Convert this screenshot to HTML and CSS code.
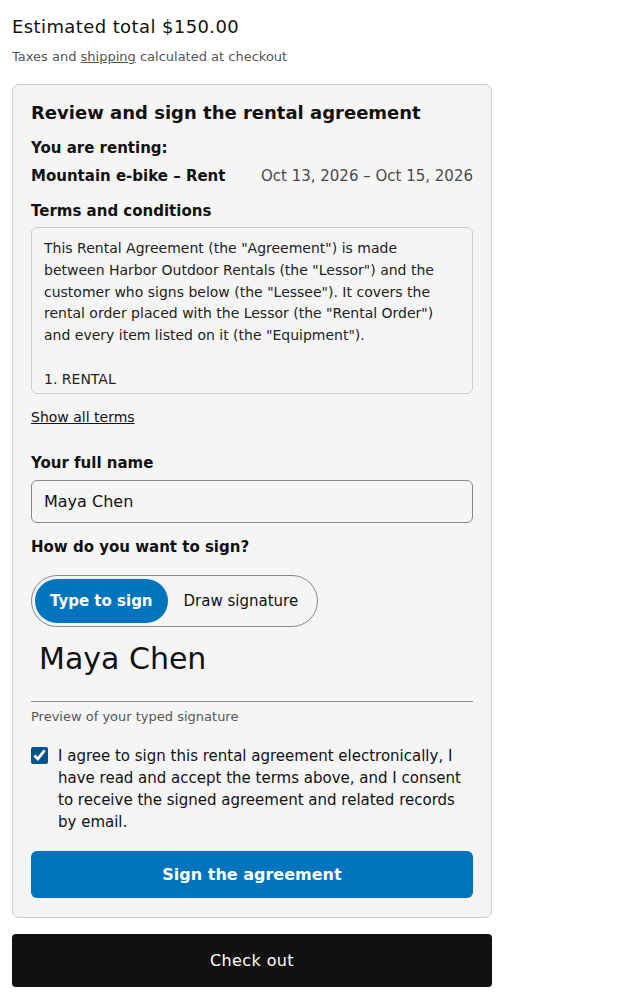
FILE: index.html
```html
<!DOCTYPE html>
<html lang="en">
<head>
  <meta charset="UTF-8" />
  <meta name="viewport" content="width=device-width, initial-scale=1.0"/>
  <title>Cart – Rental agreement</title>
  <link rel="stylesheet" href="styles.css">
</head>
<body>

  <div class="summary">
    <h2 class="total">Estimated total $150.00</h2>
    <p class="note">Taxes and <a href="#">shipping</a> calculated at checkout</p>

    <div class="agreement">
      <h3 class="title">Review and sign the rental agreement</h3>

      <p class="label renting-label">You are renting:</p>
      <div class="item">
        <span class="item-name">Mountain e-bike – Rent</span>
        <span class="item-dates">Oct 13, 2026 – Oct 15, 2026</span>
      </div>

      <p class="label terms-label">Terms and conditions</p>
      <div class="terms">This Rental Agreement (the "Agreement") is made between Harbor Outdoor Rentals (the "Lessor") and the customer who signs below (the "Lessee"). It covers the rental order placed with the Lessor (the "Rental Order") and every item listed on it (the "Equipment").

1. RENTAL
The Lessor rents the Equipment to the Lessee for the rental period shown on the Rental Order.</div>
      <a href="#" class="show-terms">Show all terms</a>

      <label class="label name-label" for="fullname">Your full name</label>
      <input class="field" id="fullname" type="text" value="Maya Chen">

      <p class="label">How do you want to sign?</p>
      <div class="toggle">
        <button class="toggle-btn active">Type to sign</button>
        <button class="toggle-btn">Draw signature</button>
      </div>

      <div class="signature">Maya Chen</div>
      <p class="sig-hint">Preview of your typed signature</p>

      <label class="consent">
        <input type="checkbox" checked>
        <span>I agree to sign this rental agreement electronically, I have read and accept the terms above, and I consent to receive the signed agreement and related records by email.</span>
      </label>

      <button class="btn-sign">Sign the agreement</button>
    </div>

    <button class="btn-checkout">Check out</button>
  </div>

</body>
</html>
```

FILE: styles.css
```css
body {
  margin: 0;
  font-family: 'DejaVu Sans', sans-serif;
  color: #111;
  background: #fff;
}

.summary {
  width: 480px;
  padding: 16px 12px;
}

.total {
  margin: 0;
  font-size: 18px;
  font-weight: normal;
  letter-spacing: 0.4px;
}

.note {
  margin: 12px 0 20px;
  font-size: 13px;
  color: #555;
}

.note a {
  color: #555;
}

.agreement {
  background: #f5f5f5;
  border: 1px solid #ccc;
  border-radius: 7px;
  padding: 17px 18px 19px;
}

.title {
  margin: 0 0 16px;
  font-size: 18px;
  font-weight: bold;
}

.label {
  display: block;
  margin: 0 0 8px;
  font-size: 15px;
  font-weight: bold;
}

.renting-label {
  margin-bottom: 10px;
}

.terms-label {
  margin-bottom: 7px;
}

.item {
  display: flex;
  justify-content: space-between;
  font-size: 15px;
  margin-bottom: 17px;
}

.item-name {
  font-weight: bold;
}

.item-dates {
  color: #4a4a4a;
}

.terms {
  height: 143px;
  overflow: hidden;
  border: 1px solid #ccc;
  border-radius: 6px;
  padding: 10px 12px 12px;
  font-size: 14px;
  line-height: 21.8px;
  white-space: pre-wrap;
  color: #222;
}

.show-terms {
  display: inline-block;
  margin-top: 15px;
  font-size: 14px;
  color: #111;
}

.name-label {
  margin-top: 28px;
  margin-bottom: 8px;
}

.field {
  display: block;
  box-sizing: border-box;
  width: 100%;
  height: 43px;
  padding: 0 12px;
  margin-bottom: 15px;
  border: 1px solid #888;
  border-radius: 6px;
  background: #f5f5f5;
  font-family: inherit;
  font-size: 16px;
  color: #111;
}

.toggle {
  display: inline-flex;
  padding: 3px;
  margin-top: 11px;
  border: 1px solid #888;
  border-radius: 999px;
}

.toggle-btn {
  border: none;
  background: none;
  height: 44px;
  padding: 0 16px;
  border-radius: 999px;
  font-family: inherit;
  font-size: 15px;
  color: #111;
  cursor: pointer;
}

.toggle-btn.active {
  padding: 0 15px;
  background: #0074bd;
  color: #fff;
  font-weight: bold;
}

.signature {
  padding: 14px 8px 25px;
  font-size: 30px;
  border-bottom: 1px solid #888;
}

.sig-hint {
  margin: 7px 0 21px;
  font-size: 13px;
  color: #555;
}

.consent {
  display: flex;
  gap: 10px;
  font-size: 15px;
  line-height: 22px;
  margin-bottom: 18px;
}

.consent input {
  margin: 2px 0 0;
  width: 17px;
  height: 17px;
  flex-shrink: 0;
  accent-color: #00558d;
}

.btn-sign {
  display: block;
  width: 100%;
  height: 47px;
  border: none;
  border-radius: 6px;
  background: #0074bd;
  color: #fff;
  font-family: inherit;
  font-size: 16px;
  font-weight: bold;
  cursor: pointer;
}

.btn-checkout {
  display: block;
  width: 100%;
  height: 53px;
  margin-top: 16px;
  border: none;
  border-radius: 4px;
  background: #111;
  color: #fff;
  font-family: inherit;
  font-size: 16px;
  letter-spacing: 0.4px;
  cursor: pointer;
}
```
